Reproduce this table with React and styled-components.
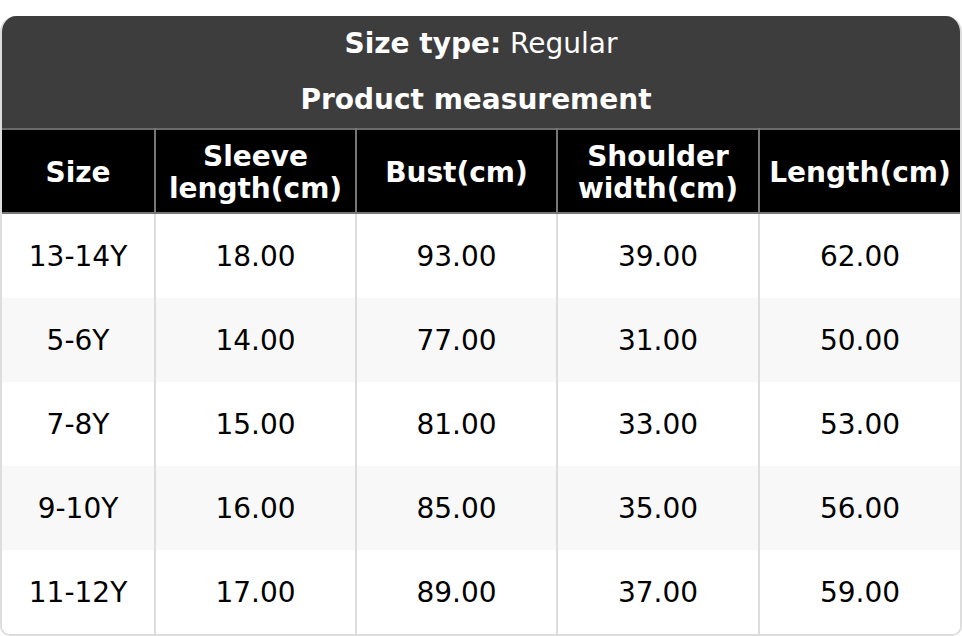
import React from "react";
import styled, { createGlobalStyle } from "styled-components";

const Global = createGlobalStyle`
  body {
    margin: 0;
    background: #fff;
    font-family: "DejaVu Sans", "Liberation Sans", sans-serif;
  }
`;

const Wrapper = styled.div`
  padding-top: 16px;
`;

const Card = styled.div`
  border: 2px solid #ddd;
  border-top: none;
  border-radius: 16px 16px 10px 10px;
  overflow: hidden;
`;

const Caption = styled.div`
  background: #3d3d3d;
  color: #fff;
  font-size: 28px;
  text-align: center;
  padding: 10px 0 0;
  b {
    font-weight: 700;
  }
`;

const CaptionLine = styled.div`
  height: ${(p) => (p.$first ? 46 : 56)}px;
  line-height: ${(p) => (p.$first ? 36 : 56)}px;
  padding-right: ${(p) => (p.$first ? 0 : 10)}px;
`;

const Table = styled.table`
  width: 100%;
  border-collapse: collapse;
  table-layout: fixed;
  font-size: 28px;
`;

const Th = styled.th`
  background: #000;
  color: #fff;
  font-weight: 700;
  height: 79px;
  line-height: 32px;
  padding: 3px 4px 0;
  border: 2px solid #777;
  border-top-color: #6a6a6a;
  &:first-child {
    border-left: none;
  }
  &:last-child {
    border-right: none;
  }
`;

const Tr = styled.tr`
  background: ${(p) => (p.$alt ? "#f8f8f8" : "#fff")};
`;

const Td = styled.td`
  height: 84px;
  padding: 0;
  text-align: center;
  color: #000;
  border-left: 2px solid #ddd;
  &:first-child {
    border-left: none;
  }
`;

const COLS = [
  { label: "Size", width: 153 },
  { label: ["Sleeve", "length(cm)"], width: 201 },
  { label: "Bust(cm)", width: 201 },
  { label: ["Shoulder", "width(cm)"], width: 202 },
  { label: "Length(cm)" },
];

const ROWS = [
  ["13-14Y", "18.00", "93.00", "39.00", "62.00"],
  ["5-6Y", "14.00", "77.00", "31.00", "50.00"],
  ["7-8Y", "15.00", "81.00", "33.00", "53.00"],
  ["9-10Y", "16.00", "85.00", "35.00", "56.00"],
  ["11-12Y", "17.00", "89.00", "37.00", "59.00"],
];

export default function App() {
  return (
    <Wrapper>
      <Global />
      <Card>
        <Caption>
          <CaptionLine $first>
            <b>Size type:</b> Regular
          </CaptionLine>
          <CaptionLine>
            <b>Product measurement</b>
          </CaptionLine>
        </Caption>
        <Table>
          <colgroup>
            {COLS.map((c, i) => (
              <col key={i} style={c.width ? { width: c.width } : undefined} />
            ))}
          </colgroup>
          <thead>
            <tr>
              {COLS.map((c, i) => (
                <Th key={i}>
                  {Array.isArray(c.label) ? (
                    <>
                      {c.label[0]}
                      <br />
                      {c.label[1]}
                    </>
                  ) : (
                    c.label
                  )}
                </Th>
              ))}
            </tr>
          </thead>
          <tbody>
            {ROWS.map((r, i) => (
              <Tr key={i} $alt={i % 2 === 1}>
                {r.map((v, j) => (
                  <Td key={j}>{v}</Td>
                ))}
              </Tr>
            ))}
          </tbody>
        </Table>
      </Card>
    </Wrapper>
  );
}
